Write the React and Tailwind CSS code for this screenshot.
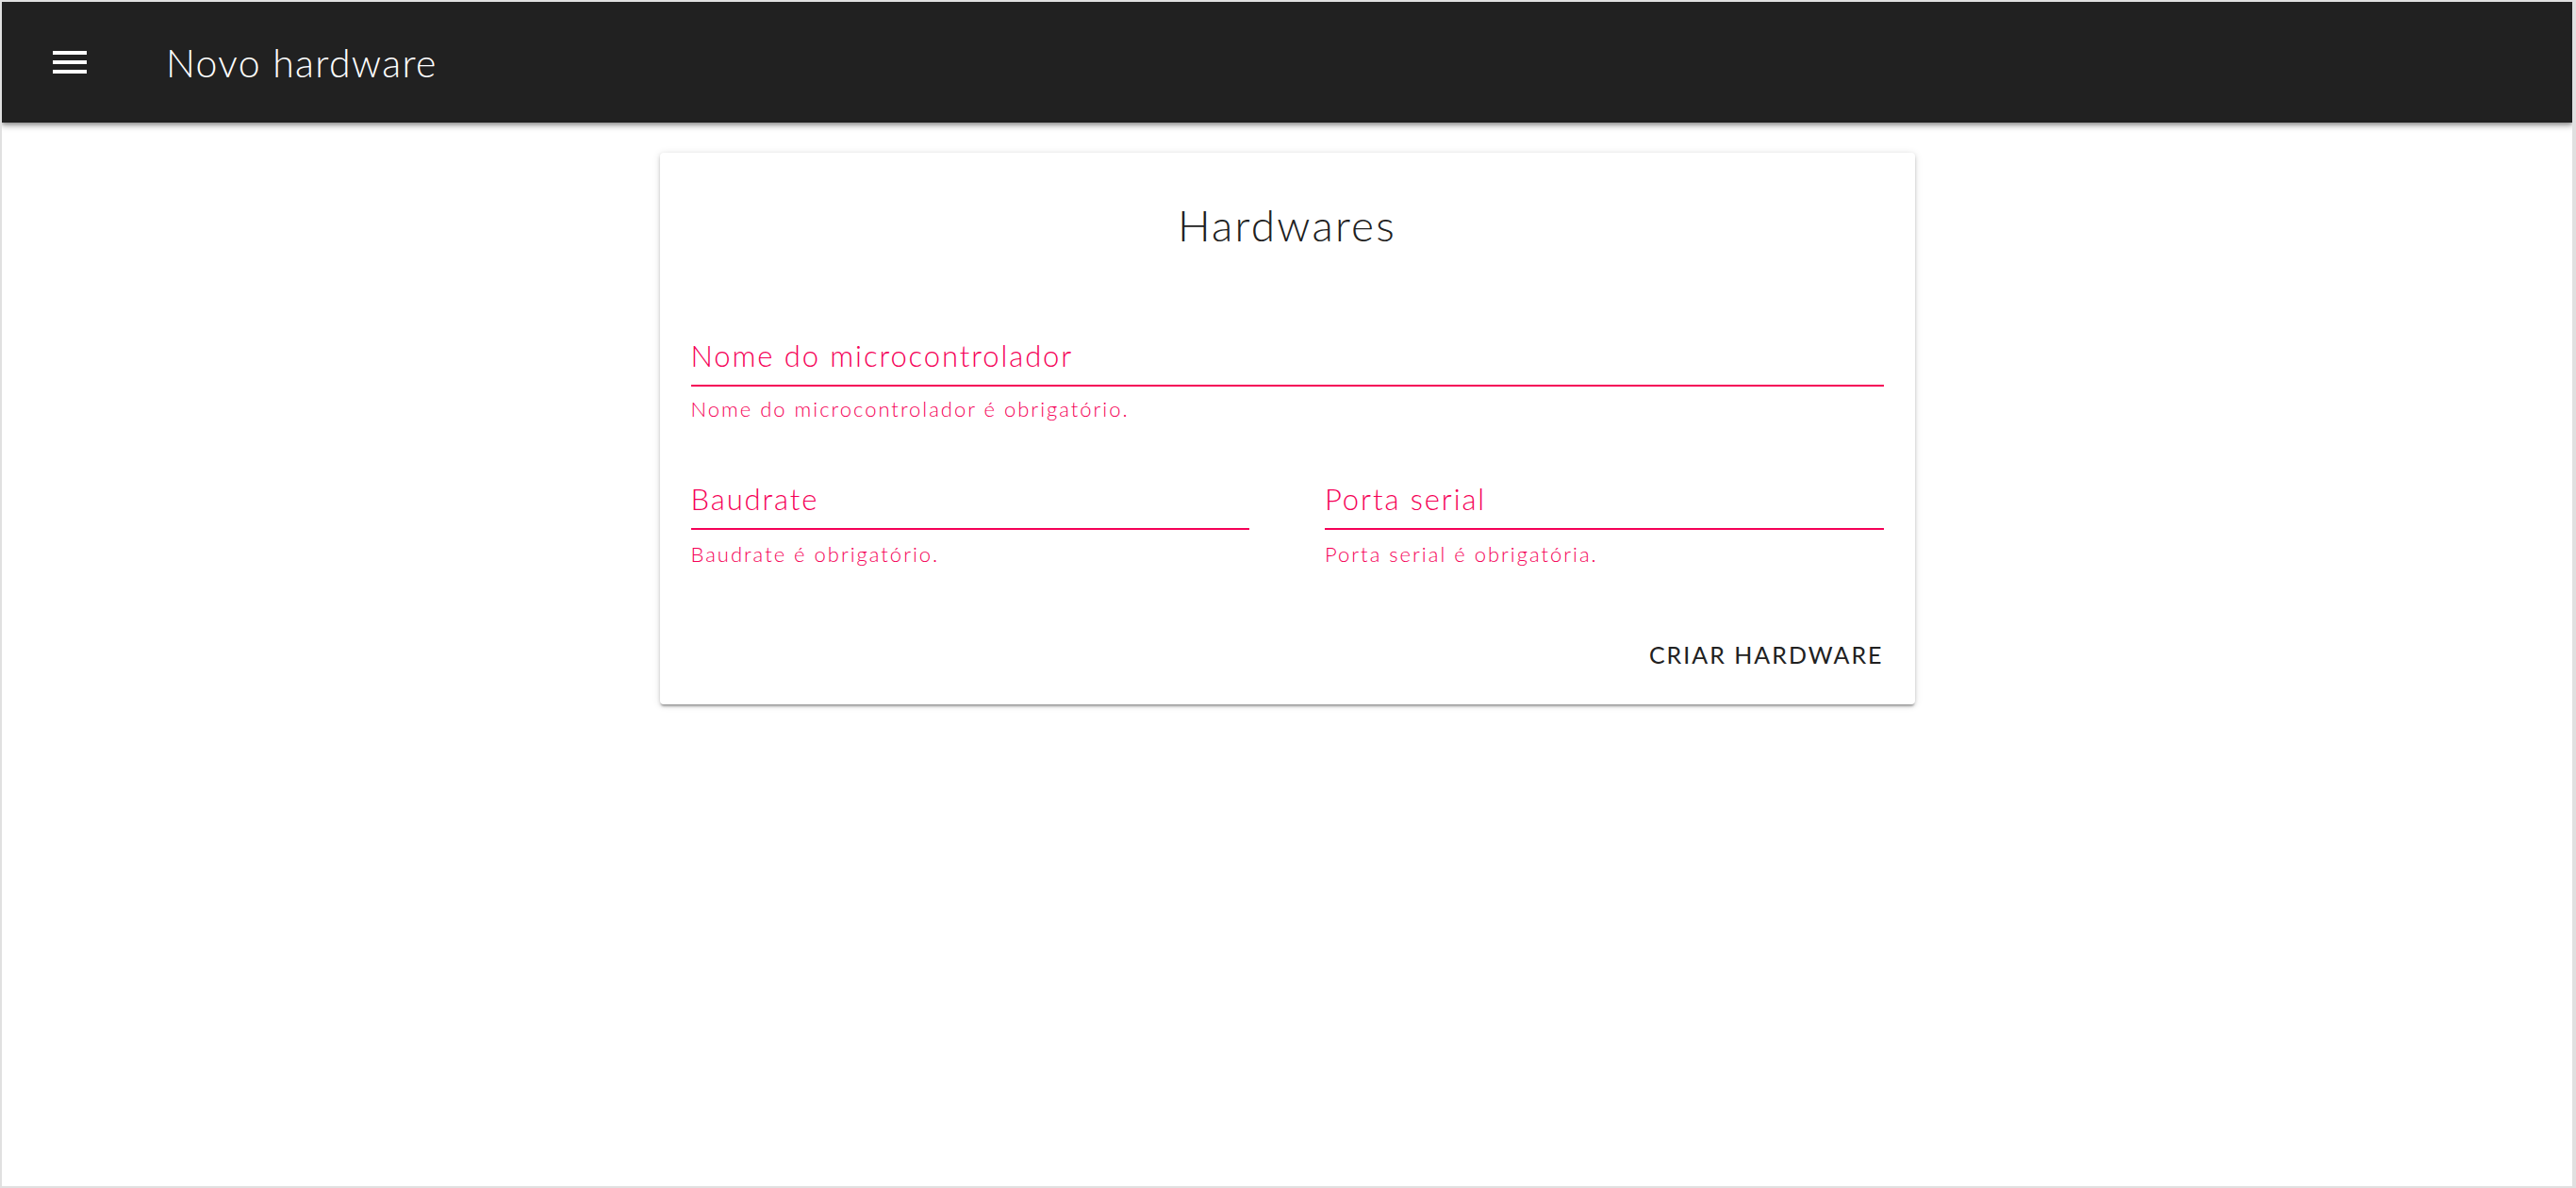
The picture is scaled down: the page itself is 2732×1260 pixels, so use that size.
export default function App() {
  return (
    <div className="h-[1260px] border-2 border-r-[4px] border-[#e0e0e0] bg-white font-['Lato',sans-serif] overflow-hidden">
      <header className="relative z-10 h-[128px] bg-[#212121] flex items-center shadow-[0_4px_6px_rgba(0,0,0,0.28),0_2px_3px_rgba(0,0,0,0.2)]">
        <button className="ml-[54px] w-[36px] h-[24px] flex flex-col justify-between" aria-label="menu">
          <span className="block h-[4px] w-full bg-white" />
          <span className="block h-[4px] w-full bg-white" />
          <span className="block h-[4px] w-full bg-white" />
        </button>
        <h1 className="ml-[84px] text-[41px] leading-[41px] font-light tracking-[1.3px] text-white">Novo hardware</h1>
      </header>

      <main className="pt-[32px]">
        <div className="mx-auto w-[1331px] rounded-[4px] bg-white px-[33px] pt-[54px] pb-[40px] shadow-[0_3px_2px_-1px_rgba(0,0,0,0.25),0_2px_4px_0_rgba(0,0,0,0.14),0_1px_9px_0_rgba(0,0,0,0.12)]">
          <h2 className="text-center text-[46px] leading-[46px] font-light tracking-[2.2px] text-[#212121]">Hardwares</h2>

          <form className="mt-[100px]">
            <div>
              <div className="border-b-2 border-[#f50057] pb-[15px] text-[31px] leading-[31px] font-light tracking-[1.9px] text-[#f50057]">
                Nome do microcontrolador
              </div>
              <p className="mt-[13px] text-[22px] leading-[22px] font-light tracking-[2px] text-[#f50057]">
                Nome do microcontrolador é obrigatório.
              </p>
            </div>

            <div className="mt-[69px] grid grid-cols-2 gap-x-[80px]">
              <div>
                <div className="border-b-2 border-[#f50057] pb-[15px] text-[31px] leading-[31px] font-light tracking-[1.9px] text-[#f50057]">
                  Baudrate
                </div>
                <p className="mt-[15px] text-[22px] leading-[22px] font-light tracking-[2px] text-[#f50057]">Baudrate é obrigatório.</p>
              </div>
              <div>
                <div className="border-b-2 border-[#f50057] pb-[15px] text-[31px] leading-[31px] font-light tracking-[1.9px] text-[#f50057]">
                  Porta serial
                </div>
                <p className="mt-[15px] text-[22px] leading-[22px] font-light tracking-[2px] text-[#f50057]">Porta serial é obrigatória.</p>
              </div>
            </div>

            <div className="mt-[83px] flex justify-end">
              <button type="button" className="text-[25px] leading-[25px] font-normal tracking-[2px] text-[#212121]">
                CRIAR HARDWARE
              </button>
            </div>
          </form>
        </div>
      </main>
    </div>
  );
}
